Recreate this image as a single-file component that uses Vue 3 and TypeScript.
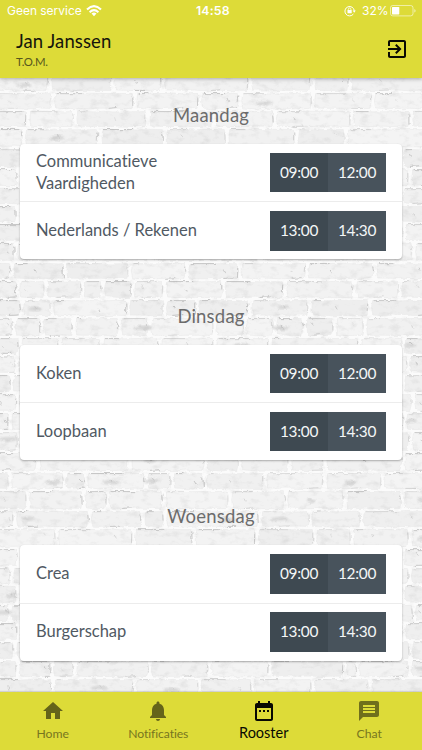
<script setup lang="ts">
interface Lesson { name: string; start: string; end: string }
interface Day { name: string; lessons: Lesson[] }
interface Brick { d: string; crack: string; shade: string; edge: number; stain: boolean; x: number; y: number; w: number }

const morning = { start: '09:00', end: '12:00' }
const afternoon = { start: '13:00', end: '14:30' }
const days: Day[] = [
  { name: 'Maandag', lessons: [{ name: 'Communicatieve Vaardigheden', ...morning }, { name: 'Nederlands / Rekenen', ...afternoon }] },
  { name: 'Dinsdag', lessons: [{ name: 'Koken', ...morning }, { name: 'Loopbaan', ...afternoon }] },
  { name: 'Woensdag', lessons: [{ name: 'Crea', ...morning }, { name: 'Burgerschap', ...afternoon }] },
]

const tabs = [
  { label: 'Home', cls: 'home', icon: 'M10 20v-6h4v6h5v-8h3L12 3 2 12h3v8z' },
  { label: 'Notificaties', cls: 'notes', icon: 'M12 22c1.1 0 2-.9 2-2h-4c0 1.1.9 2 2 2zm6-6v-5c0-3.07-1.63-5.64-4.5-6.32V4c0-.83-.67-1.5-1.5-1.5s-1.5.67-1.5 1.5v.68C7.64 5.36 6 7.92 6 11v5l-2 2v1h16v-1l-2-2z' },
  { label: 'Rooster', cls: 'active', icon: 'M9 11H7v2h2v-2zm4 0h-2v2h2v-2zm4 0h-2v2h2v-2zm2-7h-1V2h-2v2H8V2H6v2H5c-1.11 0-1.99.9-1.99 2L3 20c0 1.1.89 2 2 2h14c1.1 0 2-.9 2-2V6c0-1.1-.9-2-2-2zm0 16H5V9h14v11z' },
  { label: 'Chat', cls: 'chat', icon: 'M20 2H4c-1.1 0-1.99.9-1.99 2L2 22l4-4h14c1.1 0 2-.9 2-2V4c0-1.1-.9-2-2-2zM6 9h12v2H6V9zm8 5H6v-2h12v2zm4-6H6V6h12v2z' },
]

// Courses of the brick wall: top edge, then the x of each vertical joint.
const courses: number[][] = [
  [73, 50, 113, 163, 250, 313, 350],
  [92, 53, 135, 200, 240, 313, 373],
  [110, 28, 75, 148, 214, 275, 352, 411],
  [128, 24, 100, 165, 227, 296, 346],
  [148, 50, 110, 190, 260, 330, 402],
  [168, 19, 90, 150, 240, 300, 372, 410],
  [187, 45, 120, 205, 270, 350, 402],
  [205, 18, 90, 160, 230, 310, 380],
  [223, 50, 130, 220, 290, 370, 404],
  [242, 16, 90, 150, 260, 350, 414],
  [262, 12, 65, 130, 187, 240, 307, 375],
  [280, 18, 46, 83, 103, 133, 165, 224, 285, 355, 400],
  [299, 22, 52, 128, 165, 197, 250, 310, 370],
  [317, 14, 42, 74, 120, 150, 215, 245, 275, 305, 335, 365],
  [337, 20, 60, 101, 160, 215, 270, 360, 403],
  [355, 17, 90, 200, 300, 409],
  [374, 12, 90, 200, 300, 403],
  [393, 18, 90, 200, 300, 413],
  [412, 10, 90, 200, 300, 405],
  [431, 19, 90, 200, 300, 411],
  [452, 38, 130, 206, 240, 290, 325, 403],
  [472, 10, 65, 86, 146, 172, 205, 265, 325, 383],
  [490, 28, 84, 108, 164, 230, 286, 345, 403],
  [510, 15, 90, 143, 165, 260, 310, 362],
  [528, 57, 134, 194, 257, 315, 352, 410],
  [548, 19, 90, 200, 300, 403],
  [567, 12, 90, 200, 300, 410],
  [585, 18, 90, 200, 300, 403],
  [604, 10, 90, 200, 300, 414],
  [622, 19, 90, 200, 300, 404],
  [641, 15, 90, 200, 300, 411],
  [660, 18, 52, 75, 150, 210, 270, 345, 358, 410],
  [678, 53, 135, 200, 253, 313, 370],
  [697],
]

let seed = 17
function rnd(): number {
  seed = (seed * 16807) % 2147483647
  return seed / 2147483647
}
const f = (n: number): string => n.toFixed(1)

const bricks: Brick[] = []
for (let r = 0; r < courses.length - 1; r++) {
  const row = courses[r]
  const y = row[0] + 1.6
  const b = courses[r + 1][0] - 1.6
  const joints = [-8, ...row.slice(1), 430]
  for (let i = 0; i < joints.length - 1; i++) {
    const x = joints[i] + 1.7
    const e = joints[i + 1] - 1.7
    const j = () => (rnd() - 0.5) * 0.8
    let d = `M${f(x + 1)} ${f(y + j())}`
    for (let px = x + 9; px < e - 3; px += 9) d += `L${f(px)} ${f(y + j())}`
    d += `L${f(e - 1)} ${f(y)}L${f(e + j())} ${f((y + b) / 2)}L${f(e - 1.5)} ${f(b)}`
    for (let px = e - 9; px > x + 3; px -= 9) d += `L${f(px)} ${f(b + j())}`
    d += `L${f(x + 1)} ${f(b - 0.5)}L${f(x + j())} ${f((y + b) / 2)}Z`
    const w = e - x
    const cx = x + w * (0.15 + rnd() * 0.7)
    const cy = y + 3 + rnd() * 5
    let crack = `M${f(e - 0.5)} ${f(y + 3)}l${f(j() * 2)} ${f(4 + rnd() * 7)}M${f(x + 2)} ${f(y)}h${f(Math.min(w - 5, 4 + rnd() * 30))}`
    if (rnd() > 0.5) crack += `M${f(cx)} ${f(cy)}l${f(1 + rnd() * 2)} ${f(2 + rnd() * 2)}`
    if (rnd() > 0.5) crack += `M${f(cx)} ${f(b)}l${f(Math.min(e - cx, 10))} ${f(-rnd())}`
    const tone = 238 + Math.floor(rnd() * 7)
    bricks.push({ d, crack, shade: `rgb(${tone},${tone},${tone})`, edge: 0.2 + rnd() * 0.55, stain: rnd() > 0.87, x: cx, y: cy + 3, w: 4 + rnd() * 6 })
  }
}
</script>

<template>
  <div class="app">
    <svg class="wall" width="422" height="750" viewBox="0 0 422 750" aria-hidden="true">
      <defs>
        <filter id="rough" x="0" y="0" width="422" height="750" filterUnits="userSpaceOnUse" color-interpolation-filters="sRGB">
          <feTurbulence type="fractalNoise" baseFrequency=".16" numOctaves="3" seed="8" />
          <feDisplacementMap in="SourceGraphic" scale="4" xChannelSelector="R" yChannelSelector="G" />
          <feGaussianBlur stdDeviation=".45" />
        </filter>
        <filter id="grain" x="0" y="0" width="422" height="750" filterUnits="userSpaceOnUse" color-interpolation-filters="sRGB">
          <feTurbulence type="fractalNoise" baseFrequency=".1 .16" numOctaves="4" seed="3" />
          <feColorMatrix values="0 0 0 0 .6  0 0 0 0 .6  0 0 0 0 .6  1.6 0 0 0 -.8" />
        </filter>
        <filter id="soft"><feGaussianBlur stdDeviation="1.2" /></filter>
      </defs>
      <rect width="422" height="750" fill="#fbfbfb" />
      <g filter="url(#rough)">
        <template v-for="(b, i) in bricks" :key="i">
          <path :d="b.d" :fill="b.shade" stroke="#e9e9e9" stroke-width=".7" />
          <ellipse v-if="b.stain" :cx="b.x" :cy="b.y" :rx="b.w" ry="2.3" fill="#d9d9d9" filter="url(#soft)" />
          <path :d="b.crack" fill="none" stroke="#a4a4a4" stroke-width=".8" :opacity="b.edge" />
        </template>
      </g>
      <rect width="422" height="750" filter="url(#grain)" opacity=".25" />
    </svg>

    <header class="header">
      <div class="status">
        <span class="carrier">Geen service</span>
        <svg class="wifi" width="16" height="12" viewBox="0 0 16 12">
          <g fill="none" stroke="#fff" stroke-width="2.1"><path d="M1 4.4Q8-2 15 4.4" /><path d="M3.6 7.2Q8 3.2 12.4 7.2" /></g>
          <path d="M5.5 8.6Q8 6.6 10.5 8.6L8 11.2Z" fill="#fff" />
        </svg>
        <span class="clock">14:58</span>
        <svg class="lock" width="12" height="12" viewBox="0 0 12 12">
          <path d="M9.4 9A4.7 4.7 0 1 1 10.3 5.8" fill="none" stroke="#fff" stroke-width="1" />
          <path d="M8.6 5.5h3.2L10.2 7.7z" fill="#fff" />
          <rect x="3.5" y="5" width="4.2" height="3.3" rx=".4" fill="#fff" />
          <path d="M4.3 5.2V4.3a1.3 1.3 0 0 1 2.6 0v.9" fill="none" stroke="#fff" stroke-width=".8" />
        </svg>
        <span class="percent">32%</span>
        <svg class="battery" width="27" height="12" viewBox="0 0 27 12">
          <rect x=".5" y=".5" width="22.5" height="10.4" rx="2.3" fill="none" stroke="#fff" stroke-opacity=".55" />
          <rect x="2" y="2" width="7.3" height="7.4" rx=".6" fill="#fff" />
          <path d="M24.3 4v3.6q1.3-.4 1.3-1.8T24.3 4" fill="#fff" fill-opacity=".6" />
        </svg>
      </div>
      <div class="account">
        <div>
          <div class="name">Jan Janssen</div>
          <div class="group">T.O.M.</div>
        </div>
        <svg class="exit" width="24" height="24" viewBox="0 0 24 24">
          <path d="M10.09 15.59L11.5 17l5-5-5-5-1.41 1.41L12.67 11H3v2h9.67l-2.58 2.59zM19 3H5c-1.11 0-2 .9-2 2v4h2V5h14v14H5v-4H3v4c0 1.1.89 2 2 2h14c1.1 0 2-.9 2-2V5c0-1.1-.9-2-2-2z" />
        </svg>
      </div>
    </header>

    <main class="schedule">
      <section v-for="day in days" :key="day.name" class="day">
        <h2>{{ day.name }}</h2>
        <div class="card">
          <div v-for="lesson in day.lessons" :key="lesson.name" class="lesson">
            <div class="title">{{ lesson.name }}</div>
            <div class="times"><span>{{ lesson.start }}</span><span>{{ lesson.end }}</span></div>
          </div>
        </div>
      </section>
    </main>

    <nav class="tabs">
      <div v-for="tab in tabs" :key="tab.label" class="tab" :class="tab.cls">
        <svg width="24" height="24" viewBox="0 0 24 24"><path :d="tab.icon" /></svg>
        <span>{{ tab.label }}</span>
      </div>
    </nav>
  </div>
</template>

<style>
body { background: #f7f7f7; overflow: hidden; }
</style>

<style scoped>
.app { position: relative; width: 422px; height: 750px; overflow: hidden; display: flex; flex-direction: column; font-family: Lato, "Open Sans", sans-serif; font-variant-ligatures: none; color: #505963; }
.wall { position: absolute; left: 0; top: 0; }
.header { position: relative; height: 78px; flex: none; background: #dddb38; box-shadow: 0 1px 4px rgba(0, 0, 0, .3); }
.status { height: 22px; padding: 0 5px 0 7px; display: flex; align-items: center; color: #fff; font: 12px/22px Inter, sans-serif; }
.carrier { width: 75px; white-space: nowrap; letter-spacing: -.02px; }
.wifi { margin-left: 4px; margin-top: -1px; flex: none; }
.clock { margin-left: 94px; width: 35px; font-size: 12.3px; font-weight: 600; letter-spacing: .15px; white-space: nowrap; }
.lock { margin-left: 113px; }
.percent { margin-left: 6px; width: 26px; white-space: nowrap; }
.battery { margin-left: 2px; flex: none; }
.account { display: flex; justify-content: space-between; padding: 7px 13px 0 16px; color: #15160b; }
.name { font-size: 18.5px; line-height: 24px; letter-spacing: .1px; }
.group { font-size: 11.4px; line-height: 16px; margin-top: 1px; letter-spacing: -.25px; color: #57571d; }
.exit { margin-top: 8px; fill: #090a02; }
.schedule { position: relative; flex: 1; min-height: 0; padding: 0 20px; overflow: hidden; }
.day { height: 200.7px; }
h2 { margin: 0; height: 66px; box-sizing: border-box; padding-top: 24px; font-size: 18.5px; line-height: 26px; font-weight: 400; text-align: center; color: #6c6c6c; letter-spacing: .2px; }
.card { height: 115.2px; background: #fff; border-radius: 4px; box-shadow: 0 1px 2px rgba(0, 0, 0, .3); }
.lesson { height: 57.8px; box-sizing: border-box; padding: 0 16px; display: flex; justify-content: space-between; align-items: center; }
.lesson + .lesson { border-top: 1px solid #ececec; }
.lesson:first-child { height: 57.4px; }
.title { width: 200px; padding-right: 25px; padding-bottom: 1px; font-size: 16.5px; line-height: 22.5px; }
.times { display: flex; width: 116px; height: 39.5px; background: #48535c; color: #f4f6f7; }
.times span { width: 58px; text-align: center; font-size: 15.4px; line-height: 39px; letter-spacing: -.3px; }
.times span:first-child { background: #3e4951; }
.tabs { position: relative; height: 58px; flex: none; background: #dddb38; display: grid; grid-template-columns: repeat(4, 1fr); box-shadow: 0 -1px 1px rgba(0, 0, 0, .12); }
.tab { display: flex; flex-direction: column; align-items: center; padding-top: 7px; color: #77761f; font-size: 12.2px; line-height: 16px; }
.tab svg { fill: #65641a; }
.tab span { margin-top: 3px; }
.tab.notes span { letter-spacing: -.1px; }
.tab.active { color: #080902; font-size: 14.5px; }
.tab.active svg { fill: #080902; }
.tab.active span { margin-top: 2px; }
.tab.chat svg { fill: #706f1c; }
</style>
